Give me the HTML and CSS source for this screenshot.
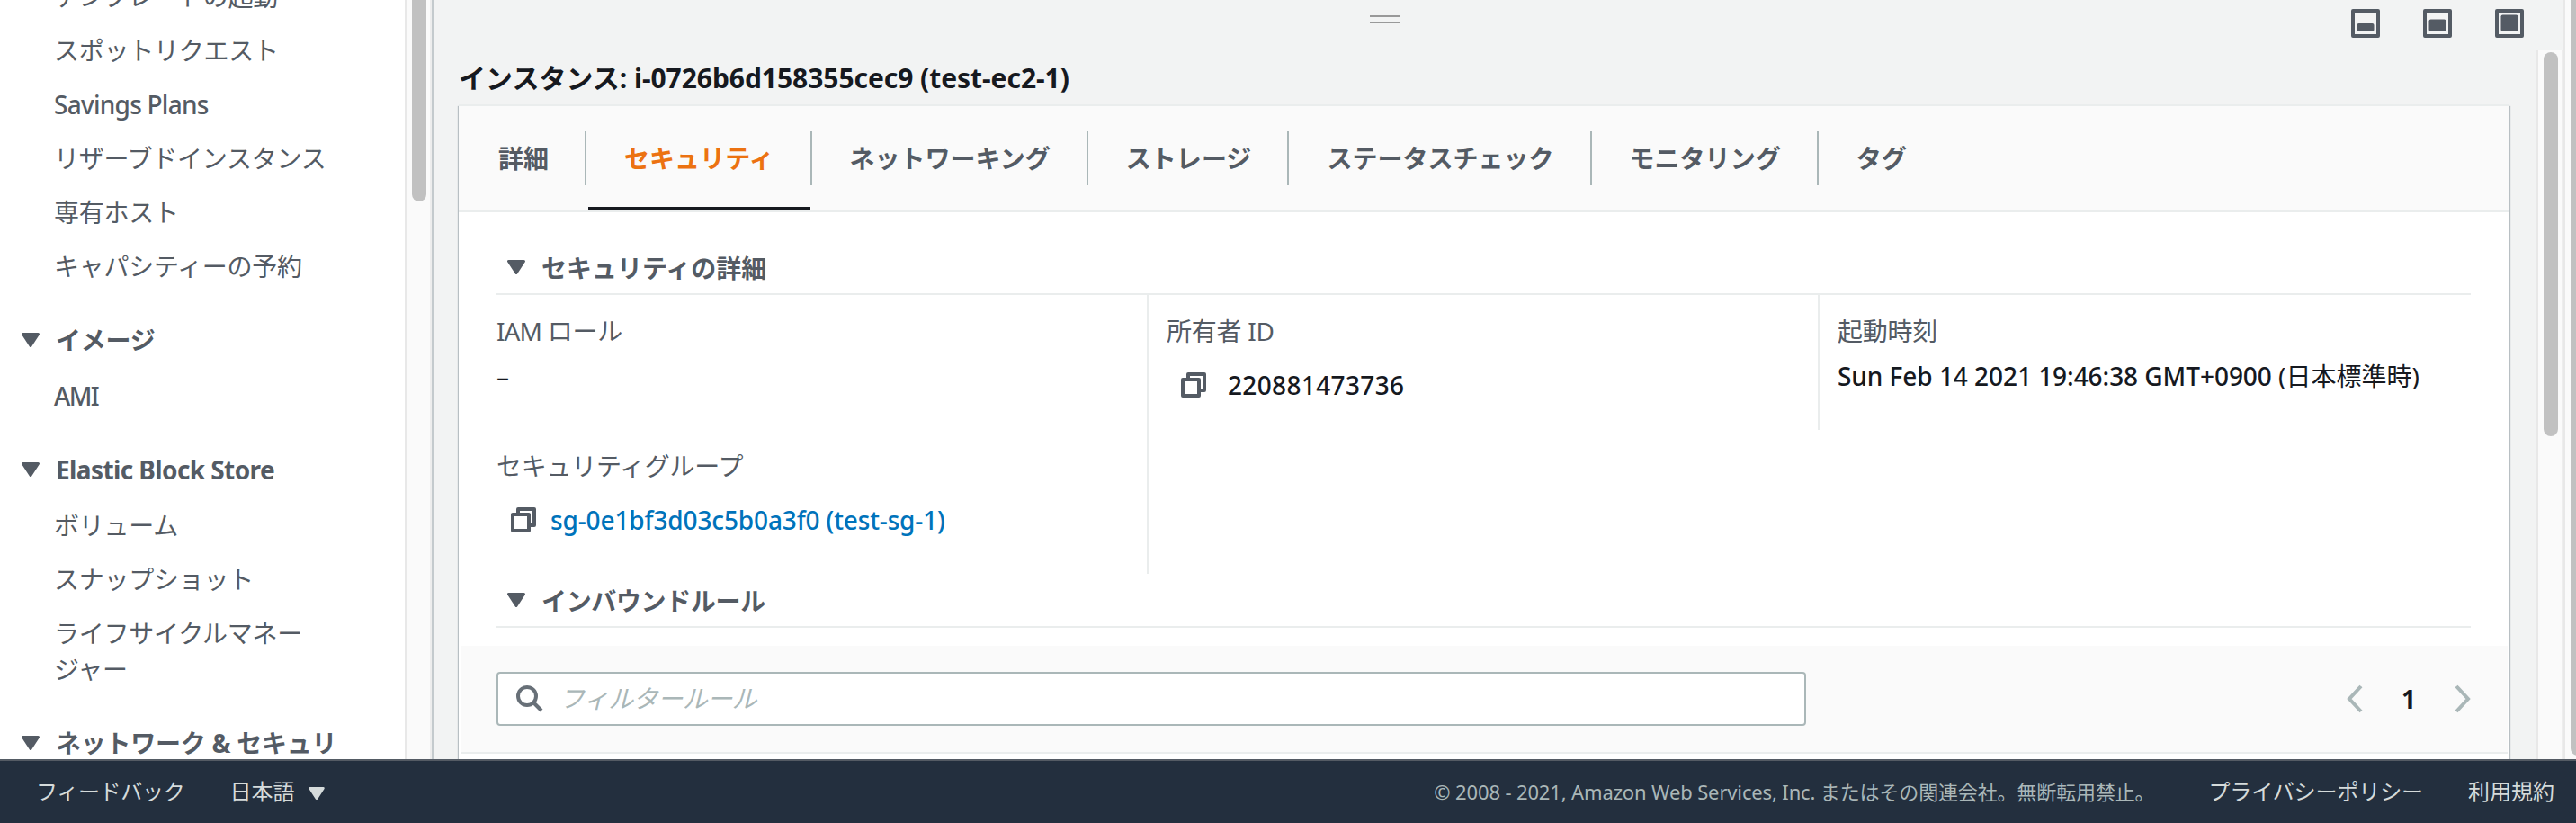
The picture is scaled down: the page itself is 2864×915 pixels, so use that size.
FILE: index.html
```html
<!DOCTYPE html>
<html lang="ja">

<head>
    <meta charset="UTF-8">
    <meta name="viewport" content="width=device-width, initial-scale=1.0">
    <title>インスタンス | EC2 Management Console</title>
    <link rel="stylesheet" href="styles.css">
</head>

<body>
    <div class="console">
        <nav class="sidebar">
            <div class="nav-list">
                <a class="nav-item">テンプレートの起動</a>
                <a class="nav-item">スポットリクエスト</a>
                <a class="nav-item savings">Savings Plans</a>
                <a class="nav-item">リザーブドインスタンス</a>
                <a class="nav-item">専有ホスト</a>
                <a class="nav-item">キャパシティーの予約</a>
                <div class="nav-group">
                    <svg class="caret" viewBox="0 0 20 16"><path d="M1.5 1.5h17L10 14.5z" /></svg>
                    <span>イメージ</span>
                </div>
                <a class="nav-item ami">AMI</a>
                <div class="nav-group">
                    <svg class="caret" viewBox="0 0 20 16"><path d="M1.5 1.5h17L10 14.5z" /></svg>
                    <span class="ebs">Elastic Block Store</span>
                </div>
                <a class="nav-item">ボリューム</a>
                <a class="nav-item">スナップショット</a>
                <a class="nav-item">ライフサイクルマネー<br>ジャー</a>
                <div class="nav-group">
                    <svg class="caret" viewBox="0 0 20 16"><path d="M1.5 1.5h17L10 14.5z" /></svg>
                    <span>ネットワーク &amp; セキュリ</span>
                </div>
            </div>
        </nav>
        <div class="scrollbar side-scroll"><div class="thumb"></div></div>

        <main class="detail">
            <div class="split-bar">
                <div class="handle"></div>
                <div class="layout-buttons">
                    <svg class="layout-icon" viewBox="0 0 32 32"><rect class="frame" x="2" y="2" width="28" height="28" /><rect x="6.5" y="16" width="19" height="9" rx="2" /></svg>
                    <svg class="layout-icon" viewBox="0 0 32 32"><rect class="frame" x="2" y="2" width="28" height="28" /><rect x="6.5" y="11.5" width="19" height="13.5" rx="2" /></svg>
                    <svg class="layout-icon" viewBox="0 0 32 32"><rect class="frame" x="2" y="2" width="28" height="28" /><rect x="6.5" y="6.5" width="19" height="18.5" rx="2" /></svg>
                </div>
            </div>
            <div class="detail-body">
                <div class="detail-content">
                    <h2 class="title">インスタンス: <span class="title-id">i-0726b6d158355cec9 (test-ec2-1)</span></h2>
                    <section class="panel">
                        <div class="tabs">
                            <a class="tab">詳細</a>
                            <a class="tab active">セキュリティ</a>
                            <a class="tab">ネットワーキング</a>
                            <a class="tab">ストレージ</a>
                            <a class="tab">ステータスチェック</a>
                            <a class="tab">モニタリング</a>
                            <a class="tab">タグ</a>
                        </div>

                        <h3 class="section-title first">
                            <svg class="caret" viewBox="0 0 20 16"><path d="M1.5 1.5h17L10 14.5z" /></svg>
                            <span>セキュリティの詳細</span>
                        </h3>
                        <div class="columns">
                            <div class="col col1">
                                <div class="field">
                                    <div class="label"><span class="iam">IAM</span> ロール</div>
                                    <div class="value">–</div>
                                </div>
                                <div class="field">
                                    <div class="label">セキュリティグループ</div>
                                    <div class="value copy-row">
                                        <svg class="copy" viewBox="0 0 28 28"><path d="M8 6V2h18v18h-4" /><path d="M2 8h18v18H2z" /></svg>
                                        <a class="link">sg-0e1bf3d03c5b0a3f0 (test-sg-1)</a>
                                    </div>
                                </div>
                            </div>
                            <div class="col col2">
                                <div class="field">
                                    <div class="label">所有者 ID</div>
                                    <div class="value copy-row owner">
                                        <svg class="copy" viewBox="0 0 28 28"><path d="M8 6V2h18v18h-4" /><path d="M2 8h18v18H2z" /></svg>
                                        <span>220881473736</span>
                                    </div>
                                </div>
                            </div>
                            <div class="col col3">
                                <div class="field">
                                    <div class="label">起動時刻</div>
                                    <div class="value"><span class="date">Sun Feb 14 2021 19:46:38 GMT+0900</span> (日本標準時)</div>
                                </div>
                            </div>
                        </div>

                        <h3 class="section-title inbound">
                            <svg class="caret" viewBox="0 0 20 16"><path d="M1.5 1.5h17L10 14.5z" /></svg>
                            <span>インバウンドルール</span>
                        </h3>
                        <div class="filter-bar">
                            <div class="search">
                                <svg class="search-icon" viewBox="0 0 30 30"><circle cx="12" cy="12" r="10" /><path d="M19 19l9 9" /></svg>
                                <span class="placeholder">フィルタールール</span>
                            </div>
                            <div class="pager">
                                <svg class="arrow" viewBox="0 0 18 32"><path d="M16 2L3 16l13 14" /></svg>
                                <span class="page">1</span>
                                <svg class="arrow" viewBox="0 0 18 32"><path d="M2 2l13 14L2 30" /></svg>
                            </div>
                        </div>
                    </section>
                </div>
                <div class="scrollbar main-scroll"><div class="thumb"></div></div>
            </div>
        </main>
        <div class="scrollbar page-scroll"><div class="thumb"></div></div>
    </div>

    <footer class="footer">
        <a class="feedback">フィードバック</a>
        <a class="language">日本語 <svg class="caret" viewBox="0 0 20 16"><path d="M1.5 1.5h17L10 14.5z" /></svg></a>
        <span class="copyright">© 2008 - 2021, Amazon Web Services, Inc. またはその関連会社。無断転用禁止。</span>
        <a class="privacy">プライバシーポリシー</a>
        <a class="terms">利用規約</a>
    </footer>
</body>

</html>
```
FILE: styles.css
```css
* {
    box-sizing: border-box;
}

body {
    margin: 0;
    height: 915px;
    overflow: hidden;
    font-family: "Noto Sans", "Noto Sans CJK JP", sans-serif;
    font-size: 28px;
    line-height: 40px;
    color: #16191f;
    background-color: #fff;
    white-space: nowrap;
}

.console {
    display: flex;
    height: 844px;
    overflow: hidden;
}

/* sidebar */

.sidebar {
    width: 450px;
    overflow: hidden;
    letter-spacing: -0.25px;
    color: #545b64;
}

.nav-list {
    margin-top: -24px;
}

.nav-item {
    display: block;
    margin-bottom: 20px;
    padding-left: 60px;
}

.nav-group {
    display: flex;
    align-items: center;
    gap: 18px;
    margin: 42px 0 22px;
    padding-left: 24px;
    font-weight: bold;
}

.caret {
    width: 20px;
    height: 16px;
    fill: currentColor;
    stroke: currentColor;
    stroke-width: 3;
    stroke-linejoin: round;
}

.savings {
    font-weight: 500;
    letter-spacing: -0.75px;
}

.ami {
    font-weight: 500;
    letter-spacing: -1.6px;
}

.ebs {
    letter-spacing: -0.6px;
}

/* scrollbars */

.scrollbar {
    background-color: #fafafa;
    border-left: 2px solid #e8e8e8;
    border-right: 2px solid #ededed;
}

.thumb {
    width: 16px;
    border-radius: 8px;
    background-color: #c1c1c1;
}

.side-scroll {
    width: 30px;
    padding-left: 6px;
}

.side-scroll .thumb {
    height: 224px;
    border-radius: 0 0 8px 8px;
}

.main-scroll {
    width: 30px;
    padding: 2px 0 0 6px;
}

.main-scroll .thumb {
    height: 427px;
}

.page-scroll {
    width: 14px;
    padding-left: 6px;
    border-right: none;
    overflow: hidden;
}

.page-scroll .thumb {
    height: 840px;
    border-radius: 0 0 8px 8px;
}

/* detail pane */

.detail {
    width: 2370px;
    border-left: 2px solid #c4cacd;
    background-color: #f2f3f3;
}

.split-bar {
    display: flex;
    justify-content: space-between;
    height: 56px;
    padding: 10px 44px 0 1041px;
}

.handle {
    width: 34px;
    height: 9px;
    margin-top: 7px;
    border-top: 2px solid #999;
    border-bottom: 2px solid #999;
}

.layout-buttons {
    display: flex;
    gap: 48px;
}

.layout-icon {
    width: 32px;
    height: 32px;
    fill: #545b64;
}

.layout-icon .frame {
    fill: none;
    stroke: #545b64;
    stroke-width: 4;
    stroke-linejoin: round;
}

.detail-body {
    display: flex;
    height: 788px;
}

.detail-content {
    width: 2338px;
    padding: 11px 30px 0 28px;
}

.title {
    margin: 0 0 9px;
    font-size: 30px;
    font-weight: bold;
}

.title-id {
    letter-spacing: -0.05px;
}

.panel {
    height: 740px;
    border-top: 2px solid #eaeded;
    background-color: #fff;
    box-shadow: -1px 2px 1px #b8bfc3, 1px 2px 1px #b8bfc3;
}

.tabs {
    display: flex;
    align-items: center;
    height: 118px;
    padding-left: 2px;
    border-bottom: 2px solid #eaeded;
    background-color: #fafafa;
    font-weight: bold;
    letter-spacing: 0.02px;
    color: #545b64;
}

.tab {
    position: relative;
    height: 60px;
    padding: 10px 40px 0 42px;
    border-right: 2px solid #aab7b8;
}

.tab:last-child {
    border-right: none;
}

.tab.active {
    color: #ec7211;
}

.tab.active::after {
    content: "";
    position: absolute;
    left: 2px;
    right: 0;
    bottom: -28px;
    height: 4px;
    background-color: #16191f;
}

.section-title {
    display: flex;
    align-items: center;
    gap: 18px;
    height: 60px;
    margin: 0 43px 0 42px;
    padding-left: 12px;
    border-bottom: 2px solid #eaeded;
    font-size: 28px;
    color: #545b64;
}

.section-title span {
    padding-top: 1px;
}

.section-title.first {
    height: 60px;
    margin-top: 32px;
}

.inbound {
    letter-spacing: -0.35px;
}

.columns {
    display: flex;
    align-items: flex-start;
    margin-left: 42px;
}

.col {
    padding: 20px 0 0 20px;
}

.col1 {
    width: 725px;
    height: 310px;
    padding-left: 0;
    border-right: 2px solid #eaeded;
}

.col2 {
    width: 746px;
    height: 150px;
    border-right: 2px solid #eaeded;
}

.field {
    height: 150px;
}

.label {
    letter-spacing: -0.25px;
    color: #545b64;
}

.iam {
    letter-spacing: -1px;
}

.value {
    margin-top: 10px;
}

.copy-row {
    display: flex;
    align-items: center;
    gap: 16px;
    margin-top: 20px;
    padding-left: 16px;
}

.owner {
    gap: 24px;
    font-weight: 500;
    letter-spacing: 0.35px;
}

.copy {
    width: 28px;
    height: 28px;
    fill: none;
    stroke: #545b64;
    stroke-width: 4;
    stroke-linejoin: round;
}

.link {
    font-weight: 500;
    letter-spacing: -0.13px;
    color: #0073bb;
}

.date {
    font-weight: 500;
    letter-spacing: -0.05px;
}

.filter-bar {
    display: flex;
    align-items: center;
    justify-content: space-between;
    height: 120px;
    margin: 20px 2px 0;
    padding: 0 41px 0 40px;
    border-bottom: 2px solid #eaeded;
    background-color: #fafafa;
}

.search {
    display: flex;
    align-items: center;
    gap: 18px;
    width: 1456px;
    height: 60px;
    padding-left: 20px;
    border: 2px solid #aab7b8;
    border-radius: 4px;
    background-color: #fff;
}

.placeholder {
    padding-bottom: 2px;
    font-style: italic;
    letter-spacing: -0.55px;
    color: #aab7b8;
}

.search-icon {
    width: 30px;
    height: 30px;
    fill: none;
    stroke: #687078;
    stroke-width: 4;
}

.pager {
    display: flex;
    align-items: center;
    gap: 43px;
}

.arrow {
    width: 18px;
    height: 32px;
    fill: none;
    stroke: #aab7b8;
    stroke-width: 4;
}

.page {
    font-weight: bold;
}

/* footer */

.footer {
    display: flex;
    align-items: center;
    height: 71px;
    padding: 0 24px 1px 40px;
    border-top: 2px solid #545b64;
    background-color: #232f3e;
    font-size: 24px;
    color: #d5dbdb;
}

.feedback {
    letter-spacing: -0.3px;
}

.language {
    margin-left: 50px;
}

.language .caret {
    width: 18px;
    height: 14px;
    margin-left: 9px;
}

.copyright {
    margin-left: auto;
    font-size: 22px;
    letter-spacing: -0.14px;
    color: #aab7b8;
}

.privacy {
    margin-left: 60px;
    letter-spacing: -0.1px;
}

.terms {
    margin-left: 50px;
}
```
